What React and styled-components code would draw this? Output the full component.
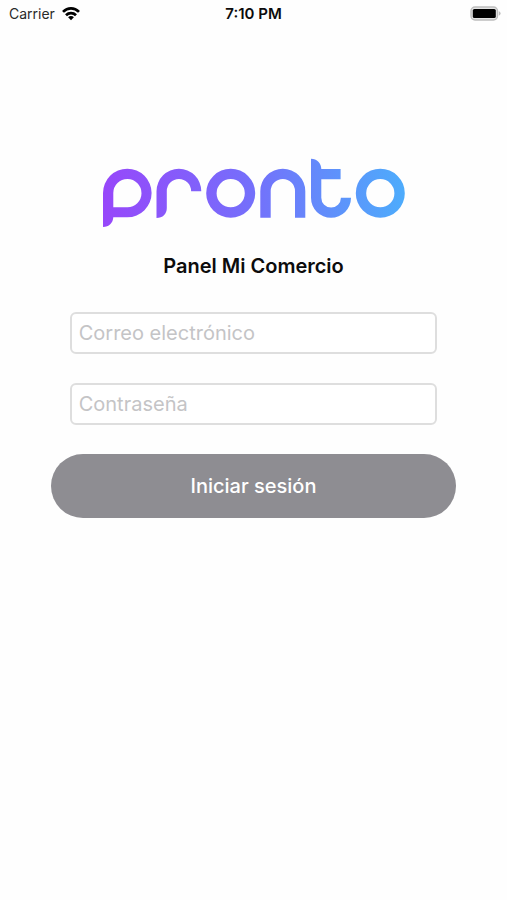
import * as React from 'react';
import styled, { createGlobalStyle } from 'styled-components';

const GlobalStyle = createGlobalStyle`
  * {
    box-sizing: border-box;
  }
  body {
    margin: 0;
    background-color: #fefefe;
    color: #0c0c0c;
    font-family: Inter, 'Liberation Sans', sans-serif;
  }
`;

const StatusBar = styled.header`
  display: grid;
  grid-template-columns: 1fr auto 1fr;
  align-items: center;
  height: 28px;
  padding: 0 6px;
  font-size: 14px;
  line-height: 20px;
`;

const Carrier = styled.div`
  display: flex;
  align-items: center;
  gap: 7px;
  padding-left: 3px;
  color: #2a2a2a;
`;

const Clock = styled.time`
  font-size: 15px;
  font-weight: 600;
`;

const BatteryIcon = styled.svg`
  justify-self: end;
`;

const Screen = styled.main`
  display: flex;
  flex-direction: column;
  align-items: center;
  padding: 130px 10% 40px;
`;

const Logo = styled.svg`
  display: block;
  width: 302px;
  max-width: 100%;
`;

const Title = styled.h1`
  margin: 24px 0 32px;
  font-size: 20px;
  line-height: 28px;
  font-weight: 600;
`;

const Form = styled.form`
  display: flex;
  flex-direction: column;
  gap: 29px;
  width: 100%;
`;

const Field = styled.input`
  height: 42px;
  margin: 0 19px;
  padding: 0 7px;
  border: 2px solid #dedede;
  border-radius: 6px;
  background-color: #fff;
  color: #0c0c0c;
  font-family: inherit;
  font-size: 20px;

  &::placeholder {
    color: #c4c4c6;
    opacity: 1;
  }
`;

const SubmitButton = styled.button`
  height: 64px;
  border: 0;
  border-radius: 32px;
  background-color: #8e8d92;
  color: #fff;
  font-family: inherit;
  font-size: 20px;
  font-weight: 500;
`;

const Wifi = () => (
  <svg width="18" height="14" viewBox="0 0 18 14" aria-hidden="true">
    <g fill="none" stroke="#000" strokeWidth="2.7">
      <path d="M1 4.9C5.6.3 12.4.3 17 4.9" />
      <path d="M4 8.2c2.8-2.8 7.2-2.8 10 0" />
    </g>
    <path d="M9 13.2 6.1 10.3c1.6-1.6 4.2-1.6 5.8 0z" />
  </svg>
);

const Battery = () => (
  <BatteryIcon width="31" height="16" viewBox="0 0 31 16" aria-hidden="true">
    <rect x="1" y="1" width="26.5" height="13" rx="4" fill="#e4e4e4" stroke="#bdbdbd" strokeWidth="1.4" />
    <rect x="2.8" y="2.9" width="23" height="9.2" rx="1.6" />
    <path d="M28.8 5.3q1.8.6 1.8 2.2t-1.8 2.2z" fill="#bdbdbd" />
  </BatteryIcon>
);

const ProntoLogo = () => (
  <Logo viewBox="0 0 302 70" role="img" aria-label="pronto">
    <defs>
      <linearGradient id="brand" gradientUnits="userSpaceOnUse" x1="0" y1="0" x2="302" y2="0">
        <stop offset="0" stopColor="#9747fa" />
        <stop offset="0.5" stopColor="#7470fb" />
        <stop offset="0.75" stopColor="#608ffb" />
        <stop offset="1" stopColor="#4dacfc" />
      </linearGradient>
    </defs>
    <g fill="url(#brand)" fillRule="evenodd">
      <path d="M0 69V35a24.3 24.3 0 1 1 24.3 24.3H10.3C10 65 6 69 0 69zM10.3 49.2h14A14.1 14.1 0 1 0 10.3 35z" />
      <path d="M53.5 60V33.2a22.4 22.4 0 0 1 44.8 0H88.1a12.1 12.1 0 0 0-24.3 0V50c0 6-4 10-10.3 10z" />
      <path d="M103.2 35.2a24.5 24.5 0 1 1 49 0 24.5 24.5 0 1 1-49 0zm10.4 0a14.1 14.1 0 1 0 28.2 0 14.1 14.1 0 1 0-28.2 0z" />
      <path d="M157.3 59.8V33.2a22.5 22.5 0 0 1 45 0v26.6H192V33.2a12.1 12.1 0 0 0-24.3 0v26.6z" />
      <path d="M208 .7c6 0 10.3 4.3 10.3 10.3h19.3v10.2h-19.3v18.6a9.8 9.8 0 0 0 19.6 0H248a20 20 0 0 1-40 0z" />
      <path d="M252.8 35.2a24.5 24.5 0 1 1 49 0 24.5 24.5 0 1 1-49 0zm10.4 0a14.1 14.1 0 1 0 28.2 0 14.1 14.1 0 1 0-28.2 0z" />
    </g>
  </Logo>
);

const App = () => (
  <>
    <GlobalStyle />
    <StatusBar>
      <Carrier>
        Carrier
        <Wifi />
      </Carrier>
      <Clock>7:10 PM</Clock>
      <Battery />
    </StatusBar>
    <Screen>
      <ProntoLogo />
      <Title>Panel Mi Comercio</Title>
      <Form onSubmit={event => event.preventDefault()}>
        <Field
          type="email"
          name="email"
          placeholder="Correo electrónico"
          aria-label="Correo electrónico"
        />
        <Field
          type="password"
          name="password"
          placeholder="Contraseña"
          aria-label="Contraseña"
        />
        <SubmitButton type="submit">Iniciar sesión</SubmitButton>
      </Form>
    </Screen>
  </>
);

export default App;
